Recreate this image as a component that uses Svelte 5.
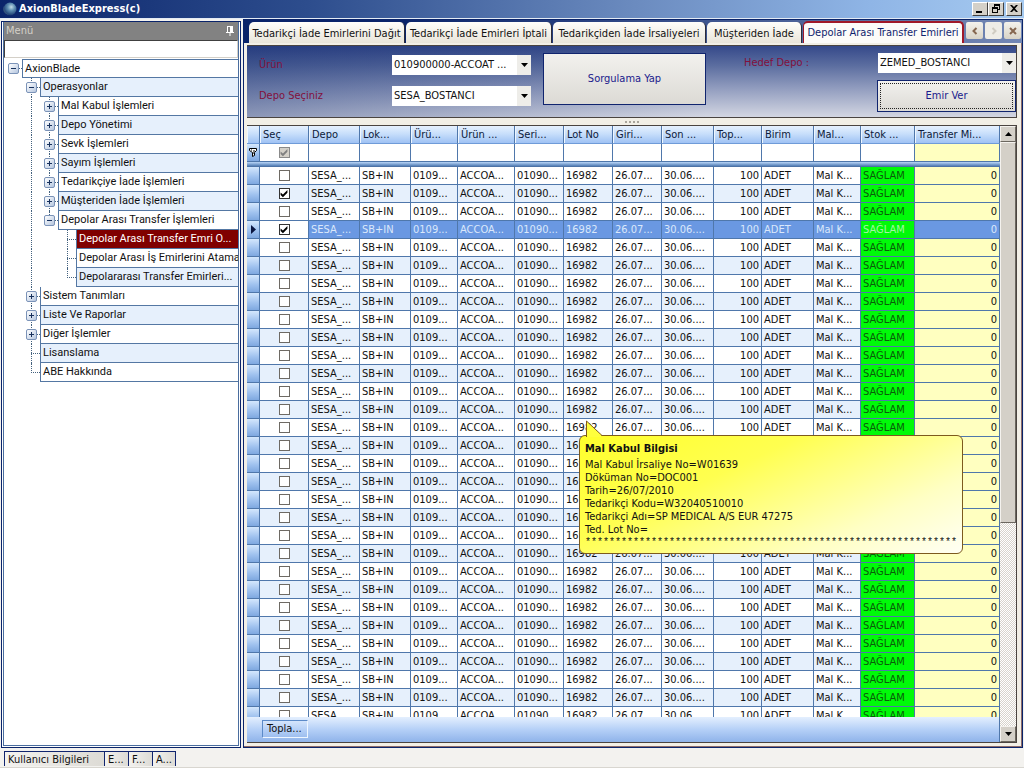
<script>
  const tree = [
    { level: 0, text: 'AxionBlade', box: '-', end: true },
    { level: 1, text: 'Operasyonlar', box: '-', first: true },
    { level: 2, text: 'Mal Kabul İşlemleri', box: '+' },
    { level: 2, text: 'Depo Yönetimi', box: '+' },
    { level: 2, text: 'Sevk İşlemleri', box: '+' },
    { level: 2, text: 'Sayım İşlemleri', box: '+' },
    { level: 2, text: 'Tedarikçiye İade İşlemleri', box: '+' },
    { level: 2, text: 'Müşteriden İade İşlemleri', box: '+' },
    { level: 2, text: 'Depolar Arası Transfer İşlemleri', box: '-', end: true },
    { level: 3, text: 'Depolar Arası Transfer Emri O...', selected: true },
    { level: 3, text: 'Depolar Arası İş Emirlerini Atama' },
    { level: 3, text: 'Depolararası Transfer Emirleri...', end: true },
    { level: 1, text: 'Sistem Tanımları', box: '+' },
    { level: 1, text: 'Liste Ve Raporlar', box: '+' },
    { level: 1, text: 'Diğer İşlemler', box: '+' },
    { level: 1, text: 'Lisanslama' },
    { level: 1, text: 'ABE Hakkında', end: true }
  ];

  // One guide column per ancestor level; only the second level continues below its children.
  const guides = (row) => Array.from({ length: row.level }, (_, i) => (i === 1 ? 'line' : 'blank'));

  const tabs = [
    'Tedarikçi İade Emirlerini Dağıt',
    'Tedarikçi İade Emirleri İptali',
    'Tedarikçiden İade İrsaliyeleri',
    'Müşteriden İade',
    'Depolar Arası Transfer Emirleri'
  ];
  let activeTab = $state(4);

  const columns = [
    { head: 'Depo', value: 'SESA_...', width: 51 },
    { head: 'Lok...', value: 'SB+IN', width: 51 },
    { head: 'Ürü...', value: '0109...', width: 47 },
    { head: 'Ürün ...', value: 'ACCOA...', width: 57 },
    { head: 'Seri...', value: '01090...', width: 49 },
    { head: 'Lot No', value: '16982', width: 49 },
    { head: 'Giri...', value: '26.07...', width: 49 },
    { head: 'Son ...', value: '30.06....', width: 52 },
    { head: 'Top...', value: '100', width: 48, kind: 'num' },
    { head: 'Birim', value: 'ADET', width: 52 },
    { head: 'Mal...', value: 'Mal K...', width: 47 },
    { head: 'Stok ...', value: 'SAĞLAM', width: 54, kind: 'stock' },
    { head: 'Transfer Mi...', value: '0', width: 85, kind: 'num amount' }
  ];

  let rows = $state(
    Array.from({ length: 31 }, (_, i) => ({ checked: i === 1 || i === 3, current: i === 3 }))
  );

  const status = ['Kullanıcı Bilgileri', 'E...', 'F...', 'A...'];
</script>

{#snippet arrow()}
  <svg class="arrow" viewBox="0 0 7 4" aria-hidden="true"><path d="M0 0h7L3.5 4z" /></svg>
{/snippet}

<div class="app">
  <header class="titlebar">
    <svg class="logo" viewBox="0 0 16 16" aria-hidden="true">
      <defs>
        <radialGradient id="globe" cx="0.6" cy="0.35" r="0.7">
          <stop offset="0" stop-color="#c3dce6" />
          <stop offset="0.4" stop-color="#5d8db0" />
          <stop offset="1" stop-color="#0d2c66" />
        </radialGradient>
      </defs>
      <circle cx="8" cy="8" r="6.5" fill="url(#globe)" />
      <path d="M2 5c-2 4 0 8 5 9-3-2-5-5-5-9z" fill="#35547e" />
    </svg>
    <h1>AxionBladeExpress(c)</h1>
    <div class="window-buttons">
      <button aria-label="Simge durumuna küçült"><svg viewBox="0 0 12 10"><path d="M2 7h6v2H2z" /></svg></button>
      <button aria-label="Önceki boyut"><svg viewBox="0 0 12 10"><path d="M4 0h6v6H8V5h1V2H5v1H4zM2 3h6v6H2zM3 5v3h4V5z" fill-rule="evenodd" /></svg></button>
      <button class="close" aria-label="Kapat"><svg viewBox="0 0 12 10"><path d="M2 1h2l2 2 2-2h2L7 4.500 10 8H8L6 6 4 8H2l3-3.500z" /></svg></button>
    </div>
  </header>

  <div class="body">
    <aside class="menu">
      <div class="menu-inner">
        <div class="menu-head">
          <h2>Menü</h2>
          <button class="pin" aria-label="Sabitle">
            <svg viewBox="0 0 8 10"><path d="M1 0h6v6h1v1H4.500v3h-1V7H0V6h1zM2 1v5h2V1z" fill-rule="evenodd" /></svg>
          </button>
        </div>
        <input class="menu-search" type="text" aria-label="Menüde ara" />
        <ul class="tree">
          {#each tree as row}
            <li class:selected={row.selected}>
              {#each guides(row) as g, i}<span class="guide {row.level === 3 && i === 2 ? 'blank' : g}"></span>{/each}
              <span class="guide own" class:end={row.end} class:root={row.level === 0}>
                {#if row.box}
                  <button class="expander" aria-label={row.text}>
                    <svg viewBox="0 0 11 11"><path d={row.box === '+' ? 'M3 5h2V3h1v2h2v1H6v2H5V6H3z' : 'M3 5h5v1H3z'} /></svg>
                  </button>
                {/if}
              </span>
              <a href="#menu">{row.text}</a>
            </li>
          {/each}
        </ul>
      </div>
    </aside>

    <main class="work">
      <div class="tabbar">
        <div class="tabs" role="tablist">
          {#each tabs as tab, i}
            <button role="tab" aria-selected={activeTab === i} class:active={activeTab === i} onclick={() => (activeTab = i)}>{tab}</button>
          {/each}
        </div>
        <div class="tab-tools">
          <button aria-label="Önceki sekme"><svg viewBox="0 0 8 8"><path d="M5.500 1 2.500 4l3 3" /></svg></button>
          <button aria-label="Sonraki sekme" class="off"><svg viewBox="0 0 8 8"><path d="M2.500 1l3 3-3 3" /></svg></button>
          <button aria-label="Sekmeyi kapat"><svg viewBox="0 0 8 8"><path d="M1 1l6 6M7 1 1 7" /></svg></button>
        </div>
      </div>

      <div class="page">
        <form class="query" onsubmit={(e) => e.preventDefault()}>
          <div class="fields">
            <label for="urun">Ürün</label>
            <div class="combo">
              <select id="urun"><option>010900000-ACCOAT ...</option></select>
              <span>{@render arrow()}</span>
            </div>
            <label for="depo">Depo Seçiniz</label>
            <div class="combo">
              <select id="depo"><option>SESA_BOSTANCI</option></select>
              <span>{@render arrow()}</span>
            </div>
          </div>
          <button class="big">Sorgulama Yap</button>
          <label class="target-label" for="hedef">Hedef Depo :</label>
          <div class="target">
            <div class="combo">
              <select id="hedef"><option>ZEMED_BOSTANCI</option></select>
              <span>{@render arrow()}</span>
            </div>
            <button class="big order">Emir Ver</button>
          </div>
        </form>

        <div class="splitter"><i></i><i></i><i></i><i></i></div>

        <div class="grid">
          <div class="sheet">
            <div class="rows">
              <table>
                <colgroup>
                  <col style="width:13px" />
                  <col style="width:49px" />
                  {#each columns as c}<col style="width:{c.width}px" />{/each}
                </colgroup>
                <thead>
                  <tr class="heads">
                    <th></th>
                    <th>Seç</th>
                    {#each columns as c}<th>{c.head}</th>{/each}
                  </tr>
                  <tr class="filter">
                    <td class="handle">
                      <svg viewBox="0 0 8 9" aria-hidden="true"><path d="M.5.500h7v2l-2 2v3l-2 1v-4l-3-2z" fill="#fff" stroke="#000" /><path d="M2 2h1M4 3h2M4 5h1" stroke="#000" /></svg>
                    </td>
                    <td class="pick"><input type="checkbox" class="mixed" checked disabled aria-label="Seç süzgeci" /></td>
                    {#each columns as c}<td class={c.kind === 'num amount' ? 'amount' : ''}></td>{/each}
                  </tr>
                  <tr class="divider"><td colspan="15"></td></tr>
                </thead>
                <tbody>
                  {#each rows as row, i}
                    <tr class:current={row.current}>
                      <td class="handle">
                        {#if row.current}<svg viewBox="0 0 5 9" class="marker" aria-hidden="true"><path d="M0 0l5 4.500L0 9z" /></svg>{/if}
                      </td>
                      <td class="pick"><input type="checkbox" bind:checked={row.checked} aria-label="Satır {i + 1}" /></td>
                      {#each columns as c}<td class={c.kind}>{c.value}</td>{/each}
                    </tr>
                  {/each}
                </tbody>
              </table>
            </div>
            <div class="summary"><span>Topla...</span></div>
          </div>
          <div class="scroll">
            <button class="up" aria-label="Yukarı kaydır">{@render arrow()}</button>
            <div class="thumb"></div>
            <div class="track"></div>
            <button aria-label="Aşağı kaydır">{@render arrow()}</button>
          </div>

          <div class="balloon" role="tooltip">
            <svg viewBox="0 0 18 17" aria-hidden="true"><path d="M1.500 17V1L17 15.500" fill="#ffff3c" stroke="#7d5a1e" /><path d="M2 15h14v2H2z" fill="#ffff3c" /></svg>
            <strong>Mal Kabul Bilgisi</strong>
            <p>Mal Kabul İrsaliye No=W01639</p>
            <p>Döküman No=DOC001</p>
            <p>Tarih=26/07/2010</p>
            <p>Tedarikçi Kodu=W32040510010</p>
            <p>Tedarikçi Adı=SP MEDICAL A/S EUR 47275</p>
            <p>Ted. Lot No=</p>
            <p class="stars">**************************************************************</p>
          </div>
        </div>
      </div>
    </main>
  </div>

  <footer class="statusbar">
    {#each status as s, i}<span class:wide={i === 0}>{s}</span>{/each}
  </footer>
</div>

<style>
  :global(body) {
    background: #f3f2ef;
  }

  .app,
  .app :where(button, input, select) {
    font: 11px/14px 'DejaVu Sans Condensed', 'Noto Sans', sans-serif;
    color: #111;
  }

  .app {
    display: flex;
    flex-direction: column;
    height: 100vh;
    min-height: 560px;
    overflow: hidden;
    background: #f3f2ef;
  }

  .app *,
  .app *::before,
  .app *::after {
    box-sizing: border-box;
  }

  button {
    margin: 0;
    padding: 0;
    border: 0;
    background: none;
  }

  svg {
    display: block;
  }

  h1,
  h2,
  p,
  ul {
    margin: 0;
    padding: 0;
  }

  /* Title bar */
  .titlebar {
    display: flex;
    align-items: center;
    flex: none;
    height: 19px;
    padding: 0 2px;
    border-bottom: 1px solid #e4ebf4;
    background: linear-gradient(90deg, #0a246a 0%, #2d4d8d 30%, #6b8bbf 62%, #8fb5e6 85%, #a6caf0 100%);
  }

  .logo {
    width: 16px;
    height: 16px;
  }

  h1 {
    flex: 1;
    padding-left: 1px;
    color: #fff;
    font-size: 11px;
    line-height: 16px;
    font-family: 'DejaVu Sans Condensed', sans-serif;
    font-weight: bold;
  }

  .window-buttons {
    display: flex;
  }

  .window-buttons button {
    width: 16px;
    height: 14px;
    border: 1px solid;
    border-color: #fff #404040 #404040 #fff;
    background: #d4d0c8;
  }

  .window-buttons .close {
    margin-left: 2px;
  }

  .window-buttons svg {
    width: 12px;
    height: 10px;
    margin: 1px;
  }

  .body {
    display: flex;
    flex: 1;
    min-height: 0;
    padding-right: 1px;
  }

  /* Menu */
  .menu {
    flex: none;
    width: 240px;
    margin: 2px 2px 0 1px;
    padding: 0 1px 1px;
    border: 1px solid #0a246a;
    background: #fff;
  }

  .menu-inner {
    height: 100%;
    border: solid #4a6d9e;
    border-width: 0 1px 1px;
    overflow: hidden;
  }

  .menu-head {
    display: flex;
    align-items: center;
    justify-content: space-between;
    height: 18px;
    padding: 0 4px 0 2px;
    background: #828282;
  }

  .menu-head h2 {
    color: #d4d0c8;
    font: inherit;
  }

  .pin svg {
    width: 8px;
    height: 10px;
    fill: #fff;
  }

  .menu-search {
    display: block;
    width: 100%;
    height: 18px;
    margin: 0 0 1px;
    padding: 0 2px;
    border: 1px solid;
    border-color: #404040 #d4d0c8 #d4d0c8 #404040;
    border-radius: 0;
    background: #fff;
  }

  .tree {
    font-family: Roboto, 'DejaVu Sans Condensed', sans-serif;
    list-style: none;
  }

  .tree li {
    display: flex;
    height: 19px;
  }

  .guide {
    position: relative;
    flex: none;
    width: 18px;
  }

  .guide.line::before,
  .guide.own::before {
    content: '';
    position: absolute;
    top: 0;
    bottom: 0;
    left: 9px;
    border-left: 1px dotted #44627f;
  }

  .guide.own::after {
    content: '';
    position: absolute;
    top: 9px;
    left: 9px;
    right: 0;
    border-top: 1px dotted #44627f;
  }

  .guide.end::before {
    bottom: 9px;
  }

  .guide.root::before {
    display: none;
  }

  .expander {
    position: absolute;
    z-index: 1;
    top: 4px;
    left: 4px;
    width: 11px;
    height: 11px;
    border: 1px solid #7b93b8;
    border-radius: 2px;
    background: linear-gradient(135deg, #fff, #b5c6df);
  }

  .expander svg {
    width: 11px;
    height: 11px;
    margin: -1px;
    fill: #16305c;
  }

  .tree a {
    flex: 1;
    min-width: 0;
    overflow: hidden;
    padding-left: 2px;
    border: solid #5477a3;
    border-width: 0 0 1px 1px;
    background: #fff;
    color: #111;
    line-height: 18px;
    text-decoration: none;
    white-space: nowrap;
  }

  .tree li:first-child a {
    border-top: 1px solid #5477a3;
    line-height: 17px;
  }

  .tree li:nth-child(even) a {
    background: #e6f0fc;
  }

  .tree li.selected:nth-child(n) a {
    background: #800000;
    color: #fff;
  }

  /* Work area */
  .work {
    display: flex;
    flex: 1;
    flex-direction: column;
    min-width: 0;
    padding: 1px;
    background: #0a246a;
  }

  .tabbar {
    display: flex;
    flex: none;
    align-items: flex-end;
    height: 23px;
    padding-left: 5px;
    background: linear-gradient(90deg, #0a246a 0 20%, #7387b4 100%);
  }

  .tabs {
    display: grid;
    flex: 1;
    grid-template-columns: 157fr 147fr 154fr 96fr 161fr;
    height: 22px;
    align-items: end;
  }

  .tabs button {
    height: 21px;
    overflow: hidden;
    margin-right: 1px;
    padding-top: 2px;
    border-right: 1px solid #2b2b3a;
    border-radius: 5px 5px 0 0;
    background: linear-gradient(#fffefa, #e9e5da);
    white-space: nowrap;
  }

  .tabs button.active {
    height: 22px;
    margin: 0;
    padding-top: 0;
    border: solid #a01828;
    border-width: 2px 2px 0 1px;
    background: #fcfbf9;
    color: #10246e;
  }

  .tab-tools {
    display: flex;
    flex: none;
    align-items: center;
    height: 22px;
    padding: 0 1px 3px 2px;
    gap: 2px;
  }

  .tab-tools button {
    display: grid;
    place-items: center;
    width: 17px;
    height: 17px;
    border-radius: 2px;
    background: linear-gradient(#f4f2ec, #d8d3c6);
  }

  .tab-tools svg {
    width: 8px;
    height: 8px;
    fill: none;
    stroke: #85664f;
    stroke-width: 2;
  }

  .tab-tools .off {
    background: #efede6;
  }

  .tab-tools .off svg {
    stroke: #d0ccc2;
  }

  .page {
    display: flex;
    flex: 1;
    flex-direction: column;
    min-height: 0;
    padding: 2px 4px 3px 3px;
    border: solid #8a6a6a;
    border-width: 0 1px 1px 0;
    background: #f2efe6;
  }

  /* Query panel */
  .query {
    display: flex;
    flex: none;
    align-items: flex-start;
    height: 73px;
    padding: 7px 0 0 12px;
    border: 1px solid #4a4440;
    border-left: 0;
    background:
      linear-gradient(90deg, rgb(10 36 106 / 35%), transparent 60%),
      linear-gradient(#35498a 0%, #5c6ea0 28%, #929dbf 60%, #d3d6e2 100%);
  }

  .query label {
    color: #82103c;
    line-height: 20px;
  }

  .fields {
    display: grid;
    grid-template-columns: 133px 139px;
    row-gap: 11px;
    padding-top: 2px;
  }

  .combo {
    display: grid;
    grid-template-columns: 1fr 14px;
    background: #fff;
  }

  .combo select {
    grid-area: 1 / 1 / 2 / 3;
    width: 100%;
    height: 20px;
    margin: 0;
    padding: 0 14px 0 2px;
    border: 0;
    border-radius: 0;
    background: #fff;
    appearance: none;
  }

  .combo span {
    display: grid;
    grid-area: 1 / 2;
    place-items: center;
    background: #eeede9;
    pointer-events: none;
  }

  .arrow {
    width: 7px;
    height: 4px;
    fill: #000;
  }

  .big {
    width: 163px;
    height: 52px;
    margin-left: 12px;
    border: 1px solid #10246e;
    background: linear-gradient(#f2f1ee, #dcdad5);
    color: #1a1a8c;
  }

  .target-label {
    margin-left: auto;
    padding-right: 68px;
  }

  .target {
    width: 139px;
    flex: none;
  }

  .target .combo {
    margin-left: 1px;
  }

  .big.order {
    width: 100%;
    height: 32px;
    margin: 7px 0 0;
    outline: 1px dotted #222;
    outline-offset: -4px;
  }

  .splitter {
    display: flex;
    flex: none;
    align-items: center;
    justify-content: center;
    gap: 2px;
    height: 7px;
  }

  .splitter i {
    width: 2px;
    height: 2px;
    background: #a9a59b;
  }

  /* Grid */
  .grid {
    position: relative;
    display: flex;
    flex: 1;
    min-height: 0;
    border: solid #4a4440;
    border-width: 1px 1px 1px 0;
  }

  .sheet {
    display: flex;
    flex: 1;
    flex-direction: column;
    min-width: 0;
    background: #fff;
  }

  .rows {
    flex: 1;
    min-height: 0;
    overflow: hidden;
  }

  table {
    width: 100%;
    border-collapse: separate;
    border-spacing: 0;
    table-layout: fixed;
  }

  td,
  th {
    height: 18px;
    overflow: hidden;
    padding: 0 2px;
    border: solid #4f77ab;
    border-width: 0 1px 1px 0;
    line-height: 17px;
    white-space: nowrap;
  }

  th {
    padding-left: 3px;
    border-bottom-color: #6f9bd8;
    background: linear-gradient(#e6f1ff 0%, #c8dffb 45%, #9fc2f4 100%);
    color: #0c1a3a;
    font-weight: normal;
    text-align: left;
    box-shadow: inset 1px 0 #eef6ff;
  }

  .filter td {
    background-color: #fff;
  }

  .filter td.amount {
    background: #ffffc0;
  }

  .divider td {
    height: 5px;
    padding: 0;
    border: 0;
    background: linear-gradient(#b9d6f8, #5f88bd 70%, #44699c);
    line-height: 5px;
  }

  td.handle,
  .filter td.handle {
    padding: 0;
    background: linear-gradient(#d4e7fd, #9dc0ee 60%, #7fa8e0);
  }

  .handle svg {
    width: 8px;
    height: 9px;
    margin: 0 auto;
  }

  .handle .marker {
    width: 5px;
    height: 9px;
    fill: #0a1540;
  }

  tbody tr:nth-child(even) td {
    background-color: #e6f0fc;
  }

  td.num {
    text-align: right;
  }

  .pick {
    text-align: center;
  }

  .pick input {
    display: block;
    width: 11px;
    height: 11px;
    margin: 0 auto;
    border: 1px solid #6e6a64;
    background: #fff;
    appearance: none;
  }

  .pick input:checked {
    border-color: #333;
  }

  .pick input:checked::before {
    content: '';
    display: block;
    width: 9px;
    height: 9px;
    background: #000;
    clip-path: polygon(12% 38%, 38% 62%, 88% 10%, 88% 42%, 38% 92%, 12% 68%);
  }

  .pick input.mixed {
    border-color: #8a8a8a;
    background: #d4d0c8;
  }

  .pick input.mixed::before {
    background: #808080;
  }

  tbody tr:nth-child(n) td.stock {
    background-color: #00fa08;
    color: #0a5c0a;
  }

  tbody tr:nth-child(n) td.amount {
    background-color: #ffffc0;
  }

  tbody tr.current:nth-child(n) td:not(.pick, .stock, .handle) {
    background-color: #6a98e2;
    color: #dbe8fb;
  }

  tbody tr.current:nth-child(n) td.pick {
    background-color: #fff;
  }

  tbody tr.current:nth-child(n) td.stock {
    color: #a4f5a4;
  }

  .summary {
    flex: none;
    height: 25px;
    padding: 3px 0 0 15px;
    border-right: 1px solid #4f77ab;
    background: linear-gradient(#e4effe, #b5d0f7 50%, #8fb3ea);
  }

  .summary span {
    display: block;
    width: 46px;
    height: 18px;
    padding-left: 4px;
    border: 1px solid;
    border-color: #5b8ac8 #eef6ff #eef6ff #5b8ac8;
    line-height: 16px;
  }

  /* Scroll bar */
  .scroll {
    display: flex;
    flex: none;
    flex-direction: column;
    width: 16px;
    background: repeating-conic-gradient(#d8d4cc 0 25%, #fff 0 50%) 0 0 / 2px 2px;
  }

  .scroll button {
    display: grid;
    flex: none;
    place-items: center;
    height: 16px;
    border: 1px solid;
    border-color: #f4f2ee #6b675f #6b675f #f4f2ee;
    background: #d4d0c8;
  }

  .scroll .up svg {
    transform: rotate(180deg);
  }

  .thumb {
    flex: 380;
    border: 1px solid;
    border-color: #f4f2ee #6b675f #6b675f #f4f2ee;
    background: #d4d0c8;
  }

  .track {
    flex: 203;
  }

  /* Balloon over the grid */
  .balloon {
    position: absolute;
    top: 309px;
    left: 332px;
    width: 384px;
    height: 119px;
    padding: 6px 5px 0;
    border: 1px solid #7d5a1e;
    border-radius: 6px;
    background: linear-gradient(155deg, #ffff2c 0%, #ffff50 35%, #ffffc4 75%, #fffff4 100%);
    white-space: nowrap;
  }

  .balloon svg {
    position: absolute;
    top: -16px;
    left: 5px;
    width: 18px;
    height: 17px;
  }

  .balloon strong {
    display: block;
    margin-bottom: 2px;
    line-height: 14px;
  }

  .balloon p {
    line-height: 13px;
  }

  .balloon .stars {
    font-family: 'Liberation Mono', monospace;
    font-size: 10px;
  }

  /* Status bar */
  .statusbar {
    display: flex;
    flex: none;
    height: 20px;
    padding: 3px 4px 1px;
    border-bottom: 1px solid #d8d6d0;
  }

  .statusbar span {
    width: 24px;
    padding-left: 3px;
    overflow: hidden;
    border: solid #10246e;
    border-width: 1px 0 0 1px;
    background: linear-gradient(90deg, #f3f2ef, #dddbd5);
    line-height: 16px;
    white-space: nowrap;
  }

  .statusbar .wide {
    width: 100px;
  }

  .statusbar span:last-child {
    border-right-width: 1px;
  }
</style>
